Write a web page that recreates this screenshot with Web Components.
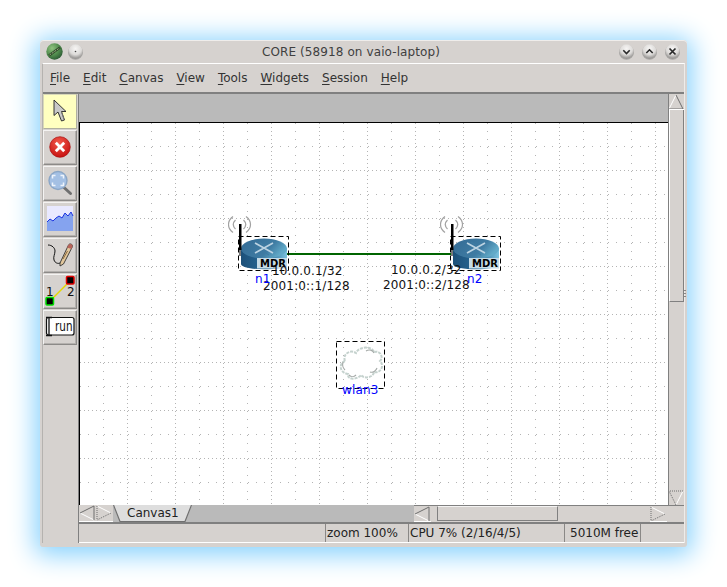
<!DOCTYPE html>
<html>
<head>
<meta charset="utf-8">
<title>CORE</title>
<style>
  html, body { margin: 0; background: #fff; }
  body { padding: 40px; width: 647px; height: 507px; overflow: hidden; font: 12px "DejaVu Sans", sans-serif; color: #222; }
</style>
</head>
<body>
<core-window>
  <title-bar slot="title" text="CORE (58918 on vaio-laptop)"></title-bar>
  <menu-bar slot="menu" items="File,Edit,Canvas,View,Tools,Widgets,Session,Help"></menu-bar>
  <tool-bar slot="tools">
    <tool-btn active icon="select"></tool-btn>
    <tool-btn icon="stop"></tool-btn>
    <tool-btn icon="zoom"></tool-btn>
    <tool-btn icon="plot"></tool-btn>
    <tool-btn icon="pen"></tool-btn>
    <tool-btn icon="link"></tool-btn>
    <tool-btn icon="run"></tool-btn>
  </tool-bar>
  <core-canvas slot="canvas">
    <link-line x="207" y="130" len="166"></link-line>
    <router-node x="148" y="92"></router-node>
    <router-node x="360" y="92"></router-node>
    <cloud-node x="256" y="218"></cloud-node>
    <node-label x="192" y="141">10.0.0.1/32</node-label>
    <node-label x="183" y="156">2001:0::1/128</node-label>
    <node-label x="175" y="149" blue>n1</node-label>
    <node-label x="311" y="140">10.0.0.2/32</node-label>
    <node-label x="303" y="155">2001:0::2/128</node-label>
    <node-label x="387" y="149" blue>n2</node-label>
    <node-label x="262" y="260" blue>wlan3</node-label>
  </core-canvas>
  <scroll-bar slot="vscroll"></scroll-bar>
  <tab-strip slot="tabs" label="Canvas1"></tab-strip>
  <status-bar slot="status" cells="zoom 100%|CPU 7% (2/16/4/5)|5010M free"></status-bar>
</core-window>

<script>
const FONT = '"DejaVu Sans", sans-serif';

class CoreWindow extends HTMLElement {
  constructor() {
    super();
    this.attachShadow({mode: 'open'}).innerHTML = `<style>
      :host { display: flex; flex-direction: column; width: 647px; height: 507px; background: #d6d2cf;
        border-radius: 4px 4px 3px 3px; box-shadow: inset 0 1px 0 #efedeb, 0 3px 26px 5px #86d1fd; position: relative; font: 12px ${FONT}; }
      .client { height: 480px; margin: 0 2px; border-top: 1px solid #fff; border-left: 1px solid #b5b2af; border-right: 1px solid #eeecea;
        display: flex; flex-direction: column; box-sizing: border-box; }
      .menu { height: 28px; border-bottom: 2px solid #808080; box-sizing: content-box; }
      .body { flex: 1; display: flex; min-height: 0; }
      .tools { width: 35px; border-right: 1px solid #808080; }
      .main { width: 605px; display: grid; grid-template-columns: 589px 16px; grid-template-rows: 28px 383px 17px 2px 18px 1px; }
      .band { background: #bababa; }
      .vs { grid-column: 2; grid-row: 1 / 3; }
      .cv { grid-column: 1; grid-row: 2; min-height: 0; }
      .tabs { grid-column: 1 / 3; grid-row: 3; }
      .rule { grid-column: 1 / 3; grid-row: 4; background: #808080; }
      .st { grid-column: 1 / 3; grid-row: 5; }
      .foot { grid-column: 1 / 3; grid-row: 6; background: #fff; }
      .grip { position: absolute; right: 1px; top: 250px; width: 2px; height: 8px; background: repeating-linear-gradient(#8a8886 0 1px, transparent 1px 3px); }
    </style>
    <slot name="title"></slot>
    <div class="client">
      <div class="menu"><slot name="menu"></slot></div>
      <div class="body">
        <div class="tools"><slot name="tools"></slot></div>
        <div class="main">
          <div class="band"></div>
          <div class="vs"><slot name="vscroll"></slot></div>
          <div class="cv"><slot name="canvas"></slot></div>
          <div class="tabs"><slot name="tabs"></slot></div>
          <div class="rule"></div>
          <div class="st"><slot name="status"></slot></div>
          <div class="foot"></div>
        </div>
      </div>
    </div>
    <div class="grip"></div>`;
  }
}

class TitleBar extends HTMLElement {
  constructor() {
    super();
    function btn(glyph) {
      return `<span class="btn"><svg width="15" height="16" viewBox="0 0 15 16">
        <defs><radialGradient id="g" cx="50%" cy="30%" r="70%"><stop offset="0" stop-color="#f6f5f4"/><stop offset=".6" stop-color="#dddbd9"/><stop offset="1" stop-color="#8f8d8b"/></radialGradient></defs>
        <circle cx="7.5" cy="8.2" r="7.5" fill="#a8a6a4"/>
        <circle cx="7.5" cy="7.5" r="7.2" fill="url(#g)"/>${glyph}</svg></span>`;
    }
    this.attachShadow({mode: 'open'}).innerHTML = `<style>
      :host { display: flex; height: 23px; align-items: center; padding: 0 7px 0 6px; box-sizing: border-box; flex: none; color: #3f3f3f; }
      .left, .right { display: flex; align-items: center; }
      .left { gap: 5px; }
      .right { gap: 8px; }
      .text { flex: 1; text-align: center; font-size: 12px; letter-spacing: .1px; white-space: nowrap; }
      .btn { width: 15px; height: 16px; display: block; }
      svg { display: block; }
    </style>
    <div class="left">
      <svg width="17" height="17" viewBox="0 0 17 17">
        <defs><radialGradient id="ball" cx="35%" cy="30%" r="75%"><stop offset="0" stop-color="#8fc27f"/><stop offset=".6" stop-color="#4f8a4c"/><stop offset="1" stop-color="#2c5a34"/></radialGradient></defs>
        <circle cx="8.5" cy="8.5" r="8.2" fill="url(#ball)"/>
        <path d="M3 12.5 L14 4.5" stroke="#2f4a2a" stroke-width="2.4"/>
        <path d="M3.5 12 L13.5 5" stroke="#b7c99a" stroke-width=".8" stroke-dasharray="2 1"/>
      </svg>
      ${btn('<circle cx="7.5" cy="7.5" r=".8" fill="#444"/>')}
    </div>
    <div class="text">${this.getAttribute('text')}</div>
    <div class="right">
      ${btn('<path d="M4.3 6.3 L7.5 9.5 L10.7 6.3" fill="none" stroke="#2a2a2a" stroke-width="1.6"/>')}
      ${btn('<path d="M4.3 9 L7.5 5.8 L10.7 9" fill="none" stroke="#2a2a2a" stroke-width="1.6"/>')}
      ${btn('<path d="M4.5 4.5 L10.5 10.5 M10.5 4.5 L4.5 10.5" fill="none" stroke="#2a2a2a" stroke-width="1.7"/>')}
    </div>`;
  }
}

class MenuBar extends HTMLElement {
  constructor() {
    super();
    let items = this.getAttribute('items').split(',').map(x => `<span><u>${x[0]}</u>${x.slice(1)}</span>`).join('');
    this.attachShadow({mode: 'open'}).innerHTML = `<style>
      :host { display: flex; height: 28px; align-items: center; padding: 0 0 0 7px; gap: 13px; font-size: 12px; color: #333; }
      u { text-underline-offset: 2px; }
    </style>${items}`;
  }
}

class ToolBar extends HTMLElement {
  constructor() {
    super();
    this.attachShadow({mode: 'open'}).innerHTML = `<style>
      :host { display: flex; flex-direction: column; gap: 1px; width: 34px; }
    </style><slot></slot>`;
  }
}

const ICONS = {
  select: `<path d="M11 6 L11 21.5 L15 18 L18.5 27 L21.5 26 L18.5 17.5 L23 17.5 Z" fill="#c8c8c8" stroke="#222" stroke-width=".9"/><path d="M18.5 18 L21 25.5" stroke="#777"/>`,
  stop: `<defs><radialGradient id="r" cx="45%" cy="30%" r="75%"><stop offset="0" stop-color="#f25a4c"/><stop offset="1" stop-color="#c40d0d"/></radialGradient></defs>
    <circle cx="17" cy="17" r="10.3" fill="url(#r)" stroke="#a91010" stroke-width=".7"/><path d="M12.8 12.8 L21.2 21.2 M21.2 12.8 L12.8 21.2" stroke="#fff" stroke-width="2.8"/>`,
  zoom: `<path d="M21 21.5 L27.5 27.5" stroke="#6f6f6f" stroke-width="3" stroke-linecap="round"/>
    <circle cx="15" cy="14.5" r="9" fill="#a4c0e4" stroke="#8ba6c6" stroke-width="1.4"/>
    <path d="M9.5 12.5 V9.5 H12.5 M17.5 9.5 H20.5 V12.5 M20.5 16.5 V19.5 H17.5 M12.5 19.5 H9.5 V16.5" fill="none" stroke="#eef4fb" stroke-width="1.5"/>`,
  plot: `<rect x="4" y="4" width="26" height="25" fill="#e9e9ff"/>
    <path d="M4 20 L7 17 L10 19 L13 16 L16 14 L19 16 L22 11 L25 14 L28 10 L30 14 V29 H4 Z" fill="#85a3ef"/>
    <path d="M4 20 L7 17 L10 19 L13 16 L16 14 L19 16 L22 11 L25 14 L28 10 L30 14" fill="none" stroke="#1c34e0" stroke-width="1"/>`,
  pen: `<path d="M5 7 C9 7 12 10 12 13 C12 16 10 19 11 22 C12 25 15 26 17 25 C19 24 19 22 20 20" fill="none" stroke="#111" stroke-width="1"/>
    <path d="M17 25 L25.5 7 C26.5 5 30 6 29.5 8.5 L20.5 26 L17 28 Z" fill="#e2c79c" stroke="#333" stroke-width=".9"/>
    <path d="M25.5 7 C26.5 5 30 6 29.5 8.5 L28.5 11 L24 9.5 Z" fill="#b8645a"/>
    <path d="M20 21 L24.5 13" stroke="#8c6a3c" stroke-width="1"/>`,
  link: `<path d="M7 27 L27 7" stroke="#e6d800" stroke-width="1.4"/>
    <rect x="3" y="23.5" width="7.5" height="7.5" rx="1" fill="#000" stroke="#00e000" stroke-width="1.5"/>
    <rect x="23.5" y="2.5" width="7.5" height="7.5" rx="1" fill="#000" stroke="#e00000" stroke-width="1.5"/>
    <text x="3" y="22" font-size="12" fill="#111" font-family='"DejaVu Sans"'>1</text>
    <text x="24" y="22" font-size="12" fill="#111" font-family='"DejaVu Sans"'>2</text>`,
  run: `<rect x="3.5" y="7.5" width="27.5" height="17.5" rx="2" fill="#fff" stroke="#111" stroke-width="1.2"/>
    <path d="M3 7.5 H9 M3 25.5 H9 M6 7.5 V25.5" stroke="#111" stroke-width="1.3" fill="none"/>
    <text x="12" y="21" font-size="14" textLength="17.5" lengthAdjust="spacingAndGlyphs" fill="#111" font-family='"DejaVu Sans"'>run</text>`
};

class ToolBtn extends HTMLElement {
  constructor() {
    super();
    this.attachShadow({mode: 'open'}).innerHTML = `<style>
      :host { display: block; width: 34px; height: 35px; box-sizing: border-box; background: #d6d2cf;
        border: 1px solid; border-color: #f4f3f2 #8c8a88 #8c8a88 #f4f3f2; box-shadow: inset -1px -1px 0 #b4b1ae; }
      :host([active]) { background: #ffffc0; border-color: #d8d8b8 #b0b0a0 #b0b0a0 #d8d8b8; box-shadow: none; }
      svg { display: block; margin: -1px 0 0 -1px; }
    </style>
    <svg width="34" height="35" viewBox="0 0 34 35">${ICONS[this.getAttribute('icon')]}</svg>`;
  }
}

class CoreCanvas extends HTMLElement {
  constructor() {
    super();
    this.attachShadow({mode: 'open'}).innerHTML = `<style>
      :host { display: block; height: 383px; box-sizing: border-box; border-top: 1px solid #000; border-left: 1px solid #000; background: #fff; position: relative; overflow: hidden; }
      svg { position: absolute; left: 0; top: 0; display: block; }
    </style>
    <svg width="588" height="382">
      <defs><pattern id="grid" width="48" height="48" patternUnits="userSpaceOnUse">
        <path d="M47.5 0 V48 M0 47.5 H48" stroke="#b4b4b4" stroke-width="1" stroke-dasharray="1 3" fill="none"/>
        <path d="M23.5 0 V48 M0 23.5 H48" stroke="#b4b4b4" stroke-width="1" stroke-dasharray="1 7" fill="none"/>
      </pattern></defs>
      <rect width="588" height="382" fill="url(#grid)"/>
    </svg>
    <slot></slot>`;
  }
}

class CanvasItem extends HTMLElement {
  base() {
    return `:host { position: absolute; left: ${this.getAttribute('x')}px; top: ${this.getAttribute('y')}px; display: block; }
      svg { display: block; }`;
  }
}

class LinkLine extends CanvasItem {
  constructor() {
    super();
    this.attachShadow({mode: 'open'}).innerHTML = `<style>${this.base()}
      :host { width: ${this.getAttribute('len')}px; height: 2px; background: #006400; }
    </style>`;
  }
}

let routerCount = 0;
class RouterNode extends CanvasItem {
  constructor() {
    super();
    let id = 'r' + (routerCount++);
    this.attachShadow({mode: 'open'}).innerHTML = `<style>${this.base()}</style>
    <svg width="64" height="58" viewBox="0 0 64 58">
      <defs>
        <linearGradient id="${id}s" x1="0" x2="1" y1="0" y2="0"><stop offset="0" stop-color="#1c5079"/><stop offset=".6" stop-color="#2a6c99"/><stop offset="1" stop-color="#7cc3df"/></linearGradient>
        <linearGradient id="${id}t" x1="0" x2="1" y1="0" y2="0.4"><stop offset="0" stop-color="#336a94"/><stop offset=".7" stop-color="#3f7ca3"/><stop offset="1" stop-color="#62aac8"/></linearGradient>
      </defs>
      <path d="M5 1.5 C-1 6 -1 13 5 17.5 M7.5 5 C4.5 8 4.5 11 7.5 14 M18 1.5 C24 6 24 13 18 17.5 M15.5 5 C18.5 8 18.5 11 15.5 14" fill="none" stroke="#a2a2a2" stroke-width="1.2"/>
      <path d="M13 34 V49 C13 56 59 56 59 49 V34 Z" fill="url(#${id}s)"/>
      <ellipse cx="36" cy="33.5" rx="23" ry="10" fill="url(#${id}t)"/>
      <path d="M27 28 L45 38 M45 28 L27 38" stroke="#bcd3e2" stroke-width="1.7"/>
      <path d="M36 30 L31 27 M36 37 L41 40" stroke="#3f7ca3" stroke-width="1"/>
      <rect x="11" y="9" width="2.5" height="26" fill="#000"/>
      <rect x="11" y="35" width="2" height="6" fill="#777"/>
      <rect x="29" y="43" width="30" height="10.5" fill="#c6dbe6"/>
      <rect x="10.5" y="21.5" width="50" height="34" fill="none" stroke="#000" stroke-dasharray="5 3"/>
      <text x="32" y="52" font-size="10" font-weight="700" fill="#000" font-family='"DejaVu Sans"'>MDR</text>
    </svg>`;
  }
}

class CloudNode extends CanvasItem {
  constructor() {
    super();
    this.attachShadow({mode: 'open'}).innerHTML = `<style>${this.base()}</style>
    <svg width="50" height="50" viewBox="0 0 50 50">
      <path d="M9 20 C6 13 15 8 20 12 C23 5 36 5 38 11 C44 9 48 16 44 20 C49 25 44 33 38 31 C37 37 28 38 25 34 C21 39 11 39 12 33 C4 32 2 23 9 20 Z" fill="#fff" stroke="#c5d2ce" stroke-width="2" stroke-dasharray="3 1"/>
      <path d="M30 10 C33 8 37 9 38 12 M41 27 C40 30 37 32 34 31 M20 34 C18 36 15 36 13 34 M7 21 C6 24 7 27 9 29" fill="none" stroke="#a5aaa8" stroke-width="1.1"/>
      <rect x=".5" y=".5" width="48" height="47" fill="none" stroke="#000" stroke-dasharray="5 3"/>
    </svg>`;
  }
}

class NodeLabel extends CanvasItem {
  constructor() {
    super();
    this.attachShadow({mode: 'open'}).innerHTML = `<style>${this.base()}
      :host { font: 12px/14px ${FONT}; letter-spacing: .15px; color: #111; white-space: nowrap; }
      :host([blue]) { color: #0000ff; }
    </style><slot></slot>`;
  }
}

function arrow(dir) {
  let rot = {up: 0, right: 90, down: 180, left: 270}[dir];
  let dash = (dir === 'up' || dir === 'left') ? 'none' : '1 1';
  return `<svg width="16" height="16" viewBox="0 0 16 16"><g transform="rotate(${rot} 8 8)">
    <path d="M1 15 L8 1" stroke="#fff" fill="none"/>
    <path d="M8 1 L15 15 M1 15 H15" stroke="#6e6e6e" fill="none" stroke-dasharray="${dash}"/>
    </g></svg>`;
}

class ScrollBar extends HTMLElement {
  constructor() {
    super();
    this.attachShadow({mode: 'open'}).innerHTML = `<style>
      :host { display: flex; flex-direction: column; width: 16px; height: 411px; box-sizing: border-box; border-left: 1px solid #808080; background: #d6d2cf; }
      .arr { height: 15px; flex: none; overflow: hidden; background: #d6d2cf; }
      .trough { flex: 1; border-top: 1px solid #fff; }
      .thumb { height: 192px; box-sizing: border-box; border-right: 1px solid #808080; border-bottom: 1px solid #808080; border-left: 1px solid #fff; }
      svg { display: block; margin-left: -1px; }
    </style>
    <div class="arr">${arrow('up')}</div>
    <div class="trough"><div class="thumb"></div></div>
    <div class="arr">${arrow('down')}</div>`;
  }
}

class TabStrip extends HTMLElement {
  constructor() {
    super();
    this.attachShadow({mode: 'open'}).innerHTML = `<style>
      :host { display: flex; height: 17px; background: #bababa; font: 12px/17px ${FONT}; color: #222; }
      .arr { width: 17px; height: 17px; box-sizing: border-box; background: #d6d2cf; flex: none; border-bottom: 1px solid #fff; overflow: hidden; }
      .tab { width: 80px; height: 17px; position: relative; flex: none; margin-right: 221px; }
      .tab svg { position: absolute; left: 0; top: 0; }
      .tab span { position: relative; display: block; padding-left: 14px; }
      .hs { flex: 1; display: flex; background: #d6d2cf; border-top: 1px solid #808080; box-sizing: border-box; }
      .hs .arr { height: 16px; }
      .trough { flex: 1; padding: 0 0 0 6px; }
      .thumb { width: 121px; height: 15px; box-sizing: border-box; border: 1px solid; border-color: #f4f3f2 #808080 #808080 #808080; }
      .corner { width: 17px; background: #d6d2cf; flex: none; }
      svg { display: block; }
    </style>
    <div class="arr">${arrow('left')}</div>
    <div class="arr">${arrow('right')}</div>
    <div class="tab">
      <svg width="80" height="17"><path d="M0 0 L7 17 H72 L79 0 Z" fill="#dedede"/><path d="M.5 0 L7 16.5 H72 L78.5 0" fill="none" stroke="#707070" stroke-width="1.2"/></svg>
      <span>${this.getAttribute('label')}</span>
    </div>
    <div class="hs">
      <div class="arr">${arrow('left')}</div>
      <div class="trough"><div class="thumb"></div></div>
      <div class="arr">${arrow('right')}</div>
      <div class="corner"></div>
    </div>`;
  }
}

class StatusBar extends HTMLElement {
  constructor() {
    super();
    let cells = this.getAttribute('cells').split('|');
    this.attachShadow({mode: 'open'}).innerHTML = `<style>
      :host { display: flex; height: 18px; font: 12px/18px ${FONT}; color: #222; white-space: nowrap; }
      div { box-sizing: border-box; height: 18px; border-right: 1px solid #8a8886; padding-left: 1px; }
      .w0 { width: 247px; }
      .w1 { width: 83px; }
      .w2 { width: 156px; }
      .w3 { width: 76px; padding-left: 5px; }
      .w4 { flex: 1; border: 0; }
    </style>
    <div class="w0"></div>
    <div class="w1">${cells[0]}</div>
    <div class="w2">${cells[1]}</div>
    <div class="w3">${cells[2]}</div>
    <div class="w4"></div>`;
  }
}

customElements.define('core-window', CoreWindow);
customElements.define('title-bar', TitleBar);
customElements.define('menu-bar', MenuBar);
customElements.define('tool-bar', ToolBar);
customElements.define('tool-btn', ToolBtn);
customElements.define('core-canvas', CoreCanvas);
customElements.define('link-line', LinkLine);
customElements.define('router-node', RouterNode);
customElements.define('cloud-node', CloudNode);
customElements.define('node-label', NodeLabel);
customElements.define('scroll-bar', ScrollBar);
customElements.define('tab-strip', TabStrip);
customElements.define('status-bar', StatusBar);
</script>
</body>
</html>
